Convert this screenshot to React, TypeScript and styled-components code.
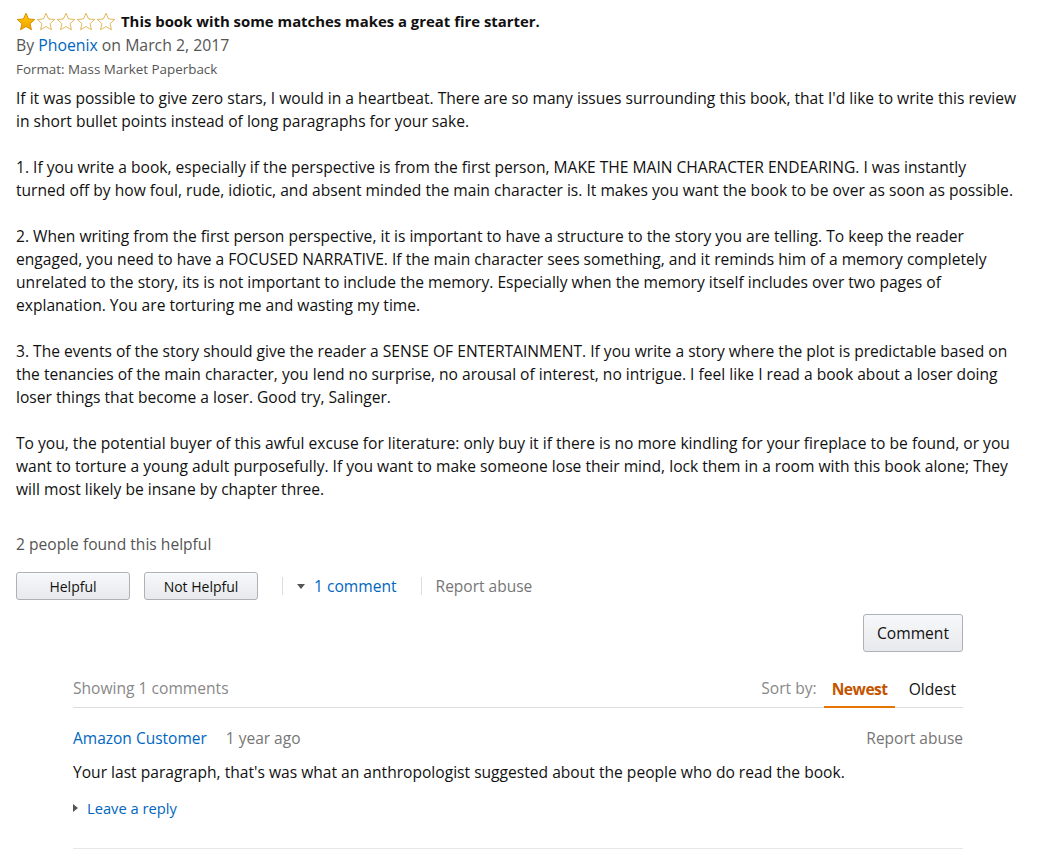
import React from "react";
import styled, { createGlobalStyle } from "styled-components";

const GlobalStyle = createGlobalStyle`
  body {
    margin: 0;
    background: #fff;
    font-family: "Open Sans", "Liberation Sans", sans-serif;
    color: #111;
  }
`;

const Page = styled.div`
  width: 1062px;
  padding: 10px 16px 0 16px;
  box-sizing: border-box;
`;

const TitleRow = styled.div`
  display: flex;
  align-items: center;
  gap: 5px;
  height: 22px;
`;

const Stars = styled.div`
  display: flex;
`;

const Title = styled.span`
  font-weight: 700;
  font-size: 14.9px;
  color: #111;
`;

const Byline = styled.div`
  font-size: 15.8px;
  color: #555;
  margin-top: 2px;
  line-height: 22px;
`;

const Link = styled.a`
  color: #0066c0;
  text-decoration: none;
`;

const Format = styled.div`
  font-size: 13.4px;
  color: #555;
  line-height: 20px;
  margin-top: 3px;
`;

const Body = styled.div`
  width: 1002px;
  margin-top: 8px;
  font-size: 15.6px;
  line-height: 23px;
  color: #111;
`;

const Para = styled.p`
  margin: 0 0 23px 0;
  &:last-child {
    margin-bottom: 0;
  }
`;

const HelpfulCount = styled.div`
  font-size: 15.6px;
  color: #555;
  margin-top: 32px;
  line-height: 22px;
`;

const ActionRow = styled.div`
  display: flex;
  align-items: center;
  margin-top: 17px;
  gap: 14px;
`;

const VoteButton = styled.button<{ $w: number }>`
  width: ${(p) => p.$w}px;
  height: 28px;
  font-family: inherit;
  font-size: 14px;
  color: #111;
  background: linear-gradient(#f7f8fa, #e7e9ec);
  border: 1px solid #adb1b8;
  border-radius: 3px;
  box-shadow: 0 1px 0 rgba(255, 255, 255, 0.6) inset;
  padding: 0;
`;

const Divider = styled.span`
  width: 1px;
  height: 18px;
  background: #ddd;
  margin-left: 10px;
`;

const ToggleLink = styled.a`
  display: flex;
  align-items: center;
  gap: 9px;
  color: #0066c0;
  font-size: 15.6px;
  text-decoration: none;
`;

const Caret = styled.span<{ $dir: "down" | "right" }>`
  width: 0;
  height: 0;
  ${(p) =>
    p.$dir === "down"
      ? `border-left: 4px solid transparent; border-right: 4px solid transparent; border-top: 5px solid #555;`
      : `border-top: 4px solid transparent; border-bottom: 4px solid transparent; border-left: 5px solid #555;`}
`;

const Muted = styled.span<{ $size?: number }>`
  color: #767676;
  font-size: ${(p) => p.$size ?? 15.5}px;
`;

const CommentBtnRow = styled.div`
  display: flex;
  justify-content: flex-end;
  width: 947px;
  margin-top: 14px;
`;

const CommentButton = styled.button`
  width: 100px;
  height: 38px;
  font-family: inherit;
  font-size: 15.6px;
  color: #111;
  background: linear-gradient(#f7f8fa, #e7e9ec);
  border: 1px solid #adb1b8;
  border-radius: 3px;
`;

const Comments = styled.section`
  margin: 21px 0 0 57px;
  width: 890px;
`;

const CommentsHeader = styled.div`
  display: flex;
  justify-content: space-between;
  align-items: stretch;
  border-bottom: 1px solid #ddd;
  height: 34px;
  font-size: 15.6px;
`;

const Showing = styled.span`
  display: flex;
  align-items: center;
  padding-bottom: 4px;
  color: #888;
`;

const SortBox = styled.div`
  display: flex;
  align-items: stretch;
  padding-right: 7px;
`;

const SortLabel = styled.span`
  display: flex;
  align-items: center;
  padding-bottom: 4px;
  color: #888;
  margin-right: 7px;
`;

const SortTab = styled.span<{ $active?: boolean }>`
  display: flex;
  align-items: center;
  padding: 0 ${(p) => (p.$active ? "7px 2px 8px" : "0 2px 14px")};
  border-bottom: 2px solid ${(p) => (p.$active ? "#e77600" : "transparent")};
  margin-bottom: -1px;
  color: ${(p) => (p.$active ? "#c45500" : "#111")};
  font-weight: ${(p) => (p.$active ? 700 : 400)};
  letter-spacing: ${(p) => (p.$active ? "-0.5px" : "0")};
`;

const CommentItem = styled.div`
  padding-top: 19px;
  padding-bottom: 30px;
  border-bottom: 1px solid #e7e7e7;
`;

const CommentMeta = styled.div`
  display: flex;
  align-items: center;
  font-size: 15.5px;
  line-height: 22px;
`;

const Author = styled(Link)`
  margin-right: 19px;
`;

const Ago = styled.span`
  color: #767676;
  flex: 1;
`;

const CommentText = styled.div`
  font-size: 15.6px;
  line-height: 22px;
  color: #111;
  margin-top: 12px;
`;

const Reply = styled.div`
  display: flex;
  align-items: center;
  gap: 9px;
  font-size: 14.7px;
  margin-top: 15px;
`;

const Star = ({ filled }: { filled: boolean }) => (
  <svg width="20" height="19" viewBox="0 0 24 23">
    <defs>
      <linearGradient id="sg" x1="0" y1="0" x2="0" y2="1">
        <stop offset="0" stopColor="#ffce00" />
        <stop offset="1" stopColor="#f0a000" />
      </linearGradient>
    </defs>
    <path
      d="M12 1.5l3.1 6.9 7.4.7-5.6 5 1.7 7.4L12 17.6l-6.6 3.9 1.7-7.4-5.6-5 7.4-.7z"
      fill={filled ? "url(#sg)" : "#fff"}
      stroke={filled ? "#d98e00" : "#e0b85a"}
      strokeWidth="1.2"
      strokeLinejoin="round"
    />
  </svg>
);

const paragraphs = [
  "If it was possible to give zero stars, I would in a heartbeat. There are so many issues surrounding this book, that I'd like to write this review in short bullet points instead of long paragraphs for your sake.",
  "1. If you write a book, especially if the perspective is from the first person, MAKE THE MAIN CHARACTER ENDEARING. I was instantly turned off by how foul, rude, idiotic, and absent minded the main character is. It makes you want the book to be over as soon as possible.",
  "2. When writing from the first person perspective, it is important to have a structure to the story you are telling. To keep the reader engaged, you need to have a FOCUSED NARRATIVE. If the main character sees something, and it reminds him of a memory completely unrelated to the story, its is not important to include the memory. Especially when the memory itself includes over two pages of explanation. You are torturing me and wasting my time.",
  "3. The events of the story should give the reader a SENSE OF ENTERTAINMENT. If you write a story where the plot is predictable based on the tenancies of the main character, you lend no surprise, no arousal of interest, no intrigue. I feel like I read a book about a loser doing loser things that become a loser. Good try, Salinger.",
  "To you, the potential buyer of this awful excuse for literature: only buy it if there is no more kindling for your fireplace to be found, or you want to torture a young adult purposefully. If you want to make someone lose their mind, lock them in a room with this book alone; They will most likely be insane by chapter three.",
];

export default function App() {
  return (
    <>
      <GlobalStyle />
      <Page>
        <TitleRow>
          <Stars>
            {[0, 1, 2, 3, 4].map((i) => (
              <Star key={i} filled={i === 0} />
            ))}
          </Stars>
          <Title>This book with some matches makes a great fire starter.</Title>
        </TitleRow>
        <Byline>
          By <Link href="#">Phoenix</Link> on March 2, 2017
        </Byline>
        <Format>Format: Mass Market Paperback</Format>
        <Body>
          {paragraphs.map((t, i) => (
            <Para key={i}>{t}</Para>
          ))}
        </Body>
        <HelpfulCount>2 people found this helpful</HelpfulCount>
        <ActionRow>
          <VoteButton $w={114}>Helpful</VoteButton>
          <VoteButton $w={114}>Not Helpful</VoteButton>
          <Divider />
          <ToggleLink href="#">
            <Caret $dir="down" />1 comment
          </ToggleLink>
          <Divider />
          <Muted>Report abuse</Muted>
        </ActionRow>
        <CommentBtnRow>
          <CommentButton>Comment</CommentButton>
        </CommentBtnRow>
        <Comments>
          <CommentsHeader>
            <Showing>Showing 1 comments</Showing>
            <SortBox>
              <SortLabel>Sort by:</SortLabel>
              <SortTab $active>Newest</SortTab>
              <SortTab>Oldest</SortTab>
            </SortBox>
          </CommentsHeader>
          <CommentItem>
            <CommentMeta>
              <Author href="#">Amazon Customer</Author>
              <Ago>1 year ago</Ago>
              <Muted $size={15.5}>Report abuse</Muted>
            </CommentMeta>
            <CommentText>
              Your last paragraph, that's was what an anthropologist suggested about the people who do read the book.
            </CommentText>
            <Reply>
              <Caret $dir="right" />
              <Link href="#">Leave a reply</Link>
            </Reply>
          </CommentItem>
        </Comments>
      </Page>
    </>
  );
}
